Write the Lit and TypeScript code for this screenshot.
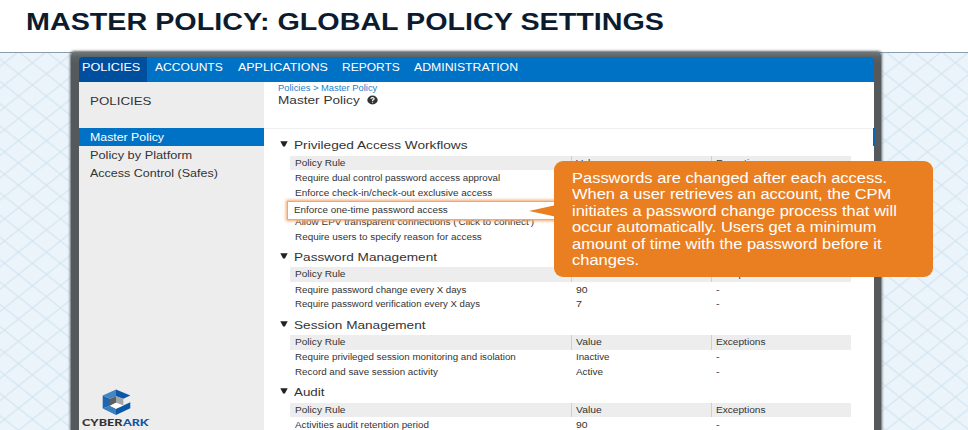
import { LitElement, html, css, svg } from "lit";
import { customElement, property } from "lit/decorators.js";

/** Single line of text stretched horizontally to a given width. */
@customElement("wide-text")
class WideText extends LitElement {
  @property() text = "";
  @property({ type: Number }) width = 0;

  static styles = css`
    :host { display: block; white-space: pre; }
    .line { display: inline-block; transform-origin: 0 50%; }
  `;

  updated() {
    const el = this.renderRoot.querySelector(".line") as HTMLElement;
    el.style.transform = "none";
    const natural = el.getBoundingClientRect().width;
    if (natural > 0 && this.width > 0) {
      el.style.transform = `scaleX(${this.width / natural})`;
    }
    this.style.width = `${this.width}px`;
  }

  render() {
    return html`<span class="line">${this.text}</span>`;
  }
}

type Label = [string, number];
interface Group {
  title: Label;
  rows: [Label, Label, Label][];
}

const DASH: Label = ["-", 3.6];
const NONE: Label = ["", 0];

const GROUPS: Group[] = [
  {
    title: ["Privileged Access Workflows", 173.5],
    rows: [
      [["Require dual control password access approval", 205.2], NONE, NONE],
      [["Enforce check-in/check-out exclusive access", 197.2], NONE, NONE],
      [NONE, NONE, NONE],
      [["Allow EPV transparent connections ('Click to connect')", 239], NONE, NONE],
      [["Require users to specify reason for access", 186.8], NONE, NONE],
    ],
  },
  {
    title: ["Password Management", 143],
    rows: [
      [["Require password change every X days", 171.3], ["90", 11.6], DASH],
      [["Require password verification every X days", 185], ["7", 6], DASH],
    ],
  },
  {
    title: ["Session Management", 131.5],
    rows: [
      [["Require privileged session monitoring and isolation", 220.8], ["Inactive", 33.5], DASH],
      [["Record and save session activity", 142.8], ["Active", 27], DASH],
    ],
  },
  {
    title: ["Audit", 30.5],
    rows: [[["Activities audit retention period", 134], ["90", 11.6], DASH]],
  },
];

const NAV: [string, number, number][] = [
  ["POLICIES", 58.3, 68],
  ["ACCOUNTS", 67.8, 83],
  ["APPLICATIONS", 89.8, 104.2],
  ["REPORTS", 57.8, 72],
  ["ADMINISTRATION", 104, 120],
];

const CALLOUT: Label[] = [
  ["Passwords are changed after each access.", 315],
  ["When a user retrieves an account, the CPM", 319.3],
  ["initiates a password change process that will", 324.8],
  ["occur automatically. Users get a minimum", 304.5],
  ["amount of time with the password before it", 309.5],
  ["changes.", 67],
];

const t = ([text, width]: Label, cls = "") =>
  html`<wide-text class=${cls} .text=${text} .width=${width}></wide-text>`;

const lattice = svg`
  <defs>
    <pattern id="lattice" width="27.97" height="22.29" patternUnits="userSpaceOnUse" patternTransform="translate(4.5 9.7)">
      <path d="M0 0L27.97 22.29M27.97 0L0 22.29" stroke="#d3e3f1" stroke-width="1.1" fill="none"/>
    </pattern>
  </defs>
  <rect width="968" height="378" fill="url(#lattice)"/>`;

@customElement("app-root")
class AppRoot extends LitElement {
  static styles = css`
    :host {
      display: block; width: 968px; height: 430px; overflow: hidden;
      background: #fff; color: #333;
      font-family: "Liberation Sans", Arial, sans-serif;
    }
    .page { display: flex; flex-direction: column; height: 430px; }
    .banner {
      box-sizing: border-box; height: 53px; flex: none; padding: 8px 0 0 26px;
      border-bottom: 1px solid #8a9dae;
      font-size: 23.5px; line-height: 28px; font-weight: bold; color: #0c1c2e;
    }
    .stage { position: relative; flex: 1; background: #eaf4fa; }
    .lattice { position: absolute; left: 0; top: 0; width: 968px; height: 378px; }
    .frame {
      position: relative; box-sizing: border-box; width: 810px; height: 400px;
      margin: -1px 0 0 71px; padding: 5px 7.5px 0 7.5px; border-radius: 4px 4px 0 0;
      background: linear-gradient(#6f777b, #5c6164 5px, #55595c 12px);
      box-shadow: 0 0 2.5px 0.5px #5b6367;
    }
    .nav {
      display: flex; height: 24.8px; background: #0072c6; color: #fff;
      border-radius: 4px 4px 0 0; overflow: hidden; font-size: 11.2px; line-height: 20.5px;
    }
    .tab { box-sizing: border-box; flex: none; padding-left: 3.7px; }
    .tab.rest { padding-left: 8px; }
    .tab.on { background: #004f9f; }
    .body { display: flex; height: 360px; background: #fff; }
    .side { width: 185.5px; background: #ededed; flex: none; font-size: 11.2px; }
    .side-title { box-sizing: border-box; height: 46px; padding: 9px 0 0 11px; line-height: 20px; font-size: 11.4px; }
    .item { box-sizing: border-box; height: 18.2px; padding: 1px 0 0 11px; line-height: 17.6px; }
    .item.on { background: #0072c6; color: #fff; }
    .brand { display: flex; flex-direction: column; padding: 207px 0 0 3.5px; }
    .cube { display: block; width: 29px; height: 27px; margin-left: 19.8px; }
    .name { display: flex; margin-top: 1px; font-family: Lato, "Open Sans", sans-serif; font-size: 8.6px; line-height: 13px; font-weight: 900; color: #333; }
    .name .ark { color: #0b57a8; }
    .name .mark { font-size: 4px; line-height: 7px; }
    .main { flex: 1; }
    .head { box-sizing: border-box; height: 47px; padding: 1px 0 0 13.9px; border-bottom: 1.5px solid #f0f0f0; position: relative; }
    .crumbs { font-size: 8.2px; line-height: 11px; color: #1b7fcc; }
    .title { display: flex; align-items: center; gap: 7.4px; font-size: 11.6px; line-height: 11px; }
    .help { display: block; width: 11px; height: 10px; margin-top: 1.5px; }
    .sliver { position: absolute; right: -1px; top: 46px; width: 2px; height: 18px; background: #0a67ae; }
    .groups { padding-top: 7.6px; }
    .group { padding-bottom: 3.6px; }
    .heading { display: flex; height: 19.5px; padding-left: 15.5px; gap: 6.5px; font-size: 11.8px; line-height: 19.6px; }
    .caret { display: block; width: 8px; height: 6px; margin-top: 5px; }
    .row {
      display: grid; grid-template-columns: 281px 140px 140px; width: 561px; height: 14.6px;
      margin-left: 26px; font-size: 8.5px; line-height: 14.6px;
    }
    .cell { box-sizing: border-box; padding-left: 4.2px; border-left: 1px solid transparent; }
    .cell:first-child { border: 0; padding-left: 4.7px; }
    .row.cols { background: #ededed; margin-bottom: 0.8px; }
    .row.cols .cell + .cell { border-left-color: #cfcfcf; }
    .marked {
      position: absolute; box-sizing: border-box; left: 215.5px; top: 149px; width: 280px; height: 18.5px;
      padding-left: 6.2px; border: 1.5px solid #f2a76c; background: #fff;
      box-shadow: 0 0 3px 1px #f2a76c; font-size: 8.5px; line-height: 16.5px;
    }
    .callout {
      position: absolute; box-sizing: border-box; left: 483px; top: 108.5px; width: 378.5px; height: 116.3px;
      padding: 9.4px 0 0 17.8px; border-radius: 9px; background: #ea7f22; color: #fff;
      font-size: 14px; line-height: 16.5px;
    }
    .tail { position: absolute; left: -25px; top: 44px; width: 26px; height: 12px; }
  `;

  private row(cells: Label[], cls = "") {
    return html`<div class="row ${cls}">${cells.map((c) => html`<div class="cell">${c[0] ? t(c) : ""}</div>`)}</div>`;
  }

  private group(g: Group) {
    return html`
      <section class="group">
        <div class="heading">
          <svg class="caret" viewBox="0 0 8 6"><path d="M0.3 0.2H7.7L4.9 5.6H3.1Z" fill="#222"/></svg>
          ${t(g.title)}
        </div>
        ${this.row([["Policy Rule", 50.5], ["Value", 25.7], ["Exceptions", 49.5]], "cols")}
        ${g.rows.map((r) => this.row(r))}
      </section>`;
  }

  render() {
    return html`
      <div class="page">
        <header class="banner">${t(["MASTER POLICY: GLOBAL POLICY SETTINGS", 638])}</header>
        <div class="stage">
          <svg class="lattice" viewBox="0 0 968 378">${lattice}</svg>
          <div class="frame">
            <nav class="nav">
              ${NAV.map(
                ([label, w, box], i) =>
                  html`<div class="tab ${i ? "rest" : "on"}" style="width:${box}px">${t([label, w])}</div>`
              )}
            </nav>
            <div class="body">
              <aside class="side">
                <div class="side-title">${t(["POLICIES", 61.5])}</div>
                <div class="item on">${t(["Master Policy", 74])}</div>
                <div class="item">${t(["Policy by Platform", 102.2])}</div>
                <div class="item">${t(["Access Control (Safes)", 127.8])}</div>
                <div class="brand">
                  <svg class="cube" viewBox="0 0 29 27">
                    <path d="M14 0.5L0.7 6.5L8 9.8L14 7.3Z" fill="#4485c4"/>
                    <path d="M14 0.5L28.3 6.5L21.3 9.8L14 7.3Z" fill="#0b57a8"/>
                    <path d="M0.7 6.5L8 9.8V16.8L0.7 19.5Z" fill="#1f66b0"/>
                    <path d="M0.7 19.5L8 16.8L14 19.8V26Z" fill="#3c7dbf"/>
                    <path d="M14 26V19.8L21.3 16.5L28.3 13.3V19.3Z" fill="#0b57a8"/>
                    <path d="M8 9.8L14 7.3V13.8L8 16.8Z" fill="#5d5f62"/>
                    <path d="M14 7.3L21.3 9.8V16.5L14 13.8Z" fill="#a2a4a7"/>
                    <path d="M14 13.8L21.3 16.5L14 19.8L8 16.8Z" fill="#fff"/>
                  </svg>
                  <div class="name">
                    ${t(["CYBER", 40.5])}${t(["ARK", 25.5], "ark")}${t(["'", 1.5], "mark")}
                  </div>
                </div>
              </aside>
              <main class="main">
                <div class="head">
                  <div class="crumbs">${t(["Policies > Master Policy", 99.3])}</div>
                  <div class="title">
                    ${t(["Master Policy", 81.7])}
                    <svg class="help" viewBox="0 0 11 10">
                      <ellipse cx="5.5" cy="5" rx="5.2" ry="4.4" fill="#333"/>
                      <path d="M3.8 3.8Q4 2.6 5.5 2.6T7.2 3.8Q7.2 4.7 5.6 5.1V6M5.6 6.7V7.7" fill="none" stroke="#fff" stroke-width="1.1"/>
                    </svg>
                  </div>
                  <div class="sliver"></div>
                </div>
                <div class="groups">${GROUPS.map((g) => this.group(g))}</div>
              </main>
            </div>
            <div class="marked">${t(["Enforce one-time password access", 153.8])}</div>
            <div class="callout">
              <svg class="tail" viewBox="0 0 26 12"><path d="M0 6L26 0.3V11.4Z" fill="#ea7f22"/></svg>
              ${CALLOUT.map((l) => t(l))}
            </div>
          </div>
        </div>
      </div>`;
  }
}
